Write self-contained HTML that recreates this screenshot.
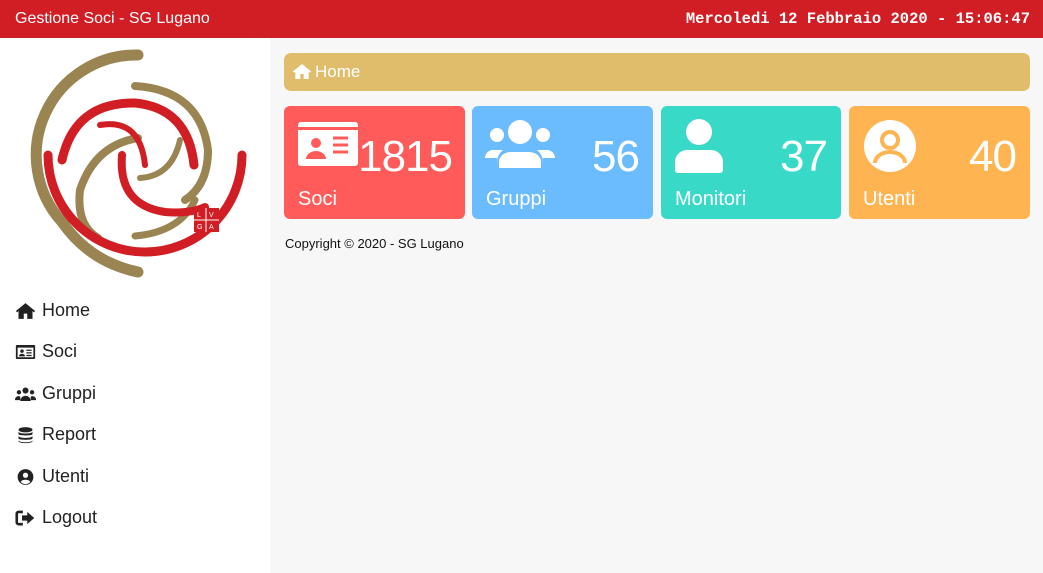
<!DOCTYPE html>
<html><head><meta charset="utf-8"><style>
*{margin:0;padding:0;box-sizing:border-box}
body{width:1043px;height:573px;overflow:hidden;font-family:"Liberation Sans",sans-serif;background:#f7f7f7;position:relative}
.top{position:absolute;left:0;top:0;width:1043px;height:38px;background:#d11e25;color:#fff}
.top .t{position:absolute;left:15px;top:10px;font-size:16px}
.top .d{position:absolute;right:13px;top:10px;font-family:"Liberation Mono",monospace;font-weight:bold;font-size:15.5px}
.side{position:absolute;left:0;top:38px;width:270px;height:535px;background:#fff}
.menu{position:absolute;left:15px}
.menu div{height:41.4px;font-size:18px;color:#222;display:flex;align-items:flex-start}
.menu svg{width:21px;height:18px;margin-right:6px;margin-top:2px}
.bc{position:absolute;left:284px;top:53px;width:746px;height:38px;border-radius:7px;background:#dfbd6b;color:#fff;font-size:17px;padding:9px 0 0 8px;display:flex}
.bc svg{width:20px;height:17px;margin-right:3px;margin-top:1px}
.card{position:absolute;top:106px;height:113px;border-radius:6px;color:#fff}
.card .n{position:absolute;right:14px;top:26px;font-size:44px;letter-spacing:-1px}
.card .l{position:absolute;left:14px;top:82px;font-size:20px}
.card svg{position:absolute;left:13px;top:12px}
.cp{position:absolute;left:285px;top:236px;font-size:13px;color:#111}
</style></head><body>
<div class="top"><div class="t">Gestione Soci - SG Lugano</div><div class="d">Mercoledi 12 Febbraio 2020 - 15:06:47</div></div>
<div class="side">
<svg width="270" height="250" style="position:absolute;left:0;top:0" viewBox="0 38 270 250">
<g fill="none" stroke-linecap="round">
<path d="M138 55 A100 100 0 0 0 62 222 Q90 262 138 272" stroke="#9a8552" stroke-width="11"/>
<path d="M135 86 Q200 90 208 150 Q208 185 185 200" stroke="#9a8552" stroke-width="8"/>
<path d="M135 236 Q180 232 195 200" stroke="#9a8552" stroke-width="7"/>
<path d="M138 138 Q95 145 80 190 Q76 225 98 238" stroke="#9a8552" stroke-width="8"/>
<path d="M140 178 Q172 176 180 140" stroke="#9a8552" stroke-width="6"/>
<path d="M48 155 A95 95 0 0 0 242 155" stroke="#d11e25" stroke-width="9"/>
<path d="M62 160 Q75 102 135 103 Q188 108 194 165" stroke="#d11e25" stroke-width="9"/>
<path d="M100 125 Q140 118 145 165" stroke="#d11e25" stroke-width="6"/>
<path d="M122 155 Q118 205 165 212 Q190 214 205 207" stroke="#d11e25" stroke-width="8"/>
</g>
<rect x="194" y="208" width="25" height="24" fill="#d11e25"/>
<path d="M206 208V232M194 220H219" stroke="#fff" stroke-width="1"/>
<text x="197" y="217" font-size="7" fill="#fff" font-family="Liberation Sans">L</text><text x="209" y="217" font-size="7" fill="#fff" font-family="Liberation Sans">V</text>
<text x="197" y="229" font-size="7" fill="#fff" font-family="Liberation Sans">G</text><text x="209" y="229" font-size="7" fill="#fff" font-family="Liberation Sans">A</text>
</svg>
<div class="menu" style="top:262px">
<div><svg viewBox="0 0 24 20"><path d="M12 1L1 10l1.5 1.5L4 10v9h6v-6h4v6h6v-9l1.5 1.5L23 10 12 1z" fill="#222"/></svg>Home</div>
<div><svg viewBox="0 0 24 20"><rect x="1" y="2" width="22" height="16" rx="1" fill="#222"/><rect x="3" y="5" width="18" height="11" fill="#fff"/><circle cx="8" cy="9" r="2" fill="#222"/><path d="M4.5 15a3.5 3 0 0 1 7 0z" fill="#222"/><path d="M13 8h6M13 11h6M13 14h6" stroke="#222" stroke-width="1.5"/></svg>Soci</div>
<div><svg viewBox="0 0 24 20"><circle cx="12" cy="6" r="3.5" fill="#222"/><circle cx="4.5" cy="8" r="2.5" fill="#222"/><circle cx="19.5" cy="8" r="2.5" fill="#222"/><path d="M6 18a6 6 0 0 1 12 0z M0 16a4 4 0 0 1 6-3v4H0z M24 16a4 4 0 0 0-6-3v4h6z" fill="#222"/></svg>Gruppi</div>
<div><svg viewBox="0 0 24 20"><ellipse cx="12" cy="4" rx="8" ry="3" fill="#222"/><path d="M4 6v3c0 2 16 2 16 0V6c0 3-16 3-16 0zM4 11v3c0 2 16 2 16 0v-3c0 3-16 3-16 0zM4 16v1c0 3 16 3 16 0v-1c0 3-16 3-16 0z" fill="#222"/></svg>Report</div>
<div><svg viewBox="0 0 24 20"><circle cx="12" cy="10" r="9" fill="#222"/><circle cx="12" cy="8" r="3" fill="#fff"/><path d="M6.5 15.5a6 4 0 0 1 11 0 7 7 0 0 1-11 0z" fill="#fff"/></svg>Utenti</div>
<div><svg viewBox="0 0 24 20"><path d="M9 3H4a2 2 0 0 0-2 2v10a2 2 0 0 0 2 2h5" stroke="#222" stroke-width="3" fill="none"/><path d="M8 7h6V3l8 7-8 7v-4H8z" fill="#222"/></svg>Logout</div>
</div>
</div>
<div class="bc"><svg viewBox="0 0 24 20"><path d="M12 1L1 10l1.5 1.5L4 10v9h6v-6h4v6h6v-9l1.5 1.5L23 10 12 1z" fill="#fff"/></svg>Home</div>
<div class="card" style="left:284px;width:181px;background:#ff5b5b"><svg width="62" height="48" viewBox="0 0 62 48"><rect x="1" y="4" width="60" height="44" rx="3" fill="#fff"/><rect x="1" y="9" width="60" height="3" fill="#ff5b5b"/><circle cx="19" cy="25" r="5" fill="#ff5b5b"/><path d="M9 41a10 8 0 0 1 20 0z" fill="#ff5b5b"/><path d="M36 20h15M36 27h15M36 34h15" stroke="#ff5b5b" stroke-width="3"/></svg><div class="n" style="right:13px">1815</div><div class="l">Soci</div></div>
<div class="card" style="left:472px;width:181px;background:#6bbbff"><svg width="70" height="54" viewBox="0 0 70 54"><circle cx="35" cy="14" r="12" fill="#fff"/><circle cx="12" cy="17" r="7" fill="#fff"/><circle cx="58" cy="17" r="7" fill="#fff"/><path d="M14 50v-6a12 10 0 0 1 12-10h18a12 10 0 0 1 12 10v6z M0 40a8 8 0 0 1 8-8h10a16 16 0 0 0-6 12v-4z M70 40a8 8 0 0 0-8-8H52a16 16 0 0 1 6 12v-4z" fill="#fff"/></svg><div class="n">56</div><div class="l">Gruppi</div></div>
<div class="card" style="left:661px;width:180px;background:#39d9c8"><svg width="50" height="56" viewBox="0 0 50 56"><circle cx="25" cy="14" r="13" fill="#fff"/><path d="M1 52V44a12 12 0 0 1 12-12h24a12 12 0 0 1 12 12v8a3 3 0 0 1-3 3H4a3 3 0 0 1-3-3z" fill="#fff"/></svg><div class="n">37</div><div class="l">Monitori</div></div>
<div class="card" style="left:849px;width:181px;background:#ffb452"><svg width="56" height="56" viewBox="0 0 56 56"><circle cx="28" cy="28" r="26" fill="#fff"/><circle cx="28" cy="22" r="8" stroke="#ffb452" stroke-width="4" fill="#fff"/><path d="M13 45a15 11 0 0 1 30 0" stroke="#ffb452" stroke-width="4" fill="none"/></svg><div class="n">40</div><div class="l">Utenti</div></div>
<div class="cp">Copyright © 2020 - SG Lugano</div>
</body></html>
